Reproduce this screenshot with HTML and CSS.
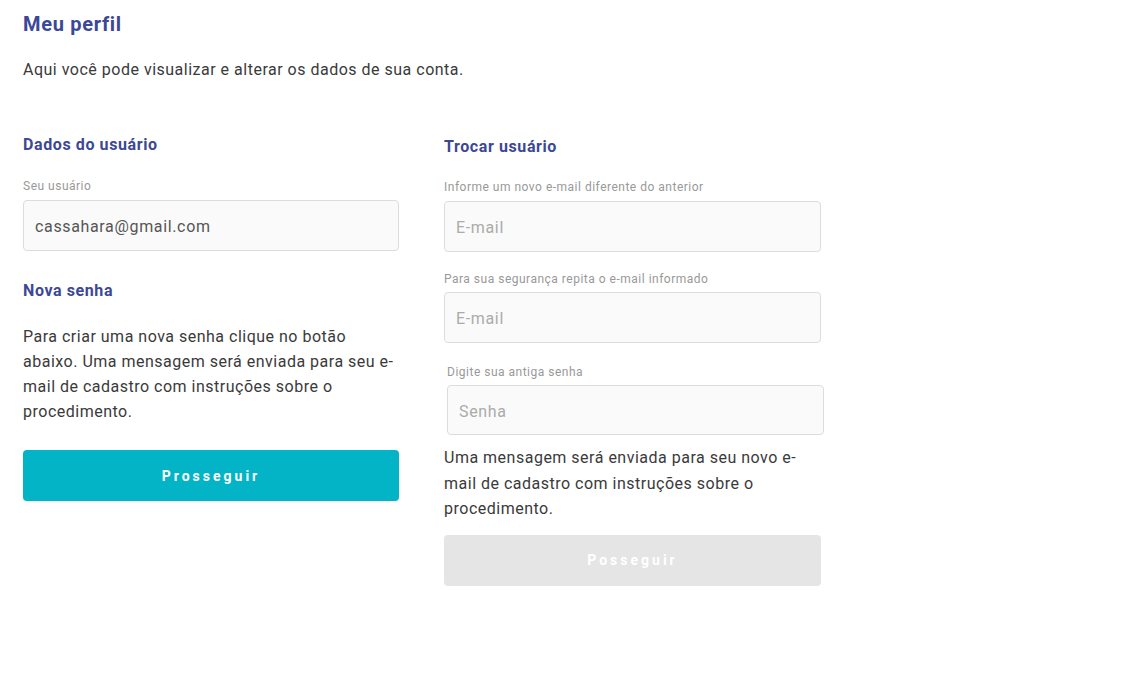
FILE: index.html
```html
<!DOCTYPE html>
<html lang="pt-BR">
<head>
<meta charset="utf-8">
<title>Meu perfil</title>
<link rel="stylesheet" href="styles.css">
</head>
<body>
<main class="page">
  <h1 class="title">Meu perfil</h1>
  <p class="intro">Aqui você pode visualizar e alterar os dados de sua conta.</p>

  <div class="columns">
    <section class="col col-left">
      <h2 class="heading">Dados do usuário</h2>
      <label class="label label-first">Seu usuário</label>
      <div class="field"><span class="value">cassahara@gmail.com</span></div>

      <h2 class="heading heading-second">Nova senha</h2>
      <p class="text text-left">Para criar uma nova senha clique no botão abaixo. Uma mensagem será enviada para seu e-mail de cadastro com instruções sobre o procedimento.</p>
      <button class="btn btn-primary">Prosseguir</button>
    </section>

    <section class="col col-right">
      <h2 class="heading">Trocar usuário</h2>
      <label class="label label-first">Informe um novo e-mail diferente do anterior</label>
      <div class="field"><span class="placeholder">E-mail</span></div>

      <label class="label label-second">Para sua segurança repita o e-mail informado</label>
      <div class="field"><span class="placeholder">E-mail</span></div>

      <div class="shifted">
        <label class="label label-third">Digite sua antiga senha</label>
        <div class="field field-short"><span class="placeholder">Senha</span></div>
      </div>

      <p class="text text-right">Uma mensagem será enviada para seu novo e-mail de cadastro com instruções sobre o procedimento.</p>
      <button class="btn btn-disabled">Posseguir</button>
    </section>
  </div>
</main>
</body>
</html>
```

FILE: styles.css
```css
* { box-sizing: border-box; }

body {
  margin: 0;
  background: #ffffff;
  font-family: Roboto, "Liberation Sans", sans-serif;
  color: #3a3a3a;
}

.page {
  padding: 12px 23px 0;
}

.title {
  margin: 0;
  font-size: 20px;
  line-height: 24px;
  font-weight: 700;
  letter-spacing: 0.7px;
  color: #3b4896;
}

.intro {
  margin: 22px 0 0;
  font-size: 16px;
  line-height: 24px;
  letter-spacing: 0.5px;
  color: #3a3a3a;
}

.columns {
  display: flex;
  gap: 45px;
  margin-top: 53px;
}

.col {
  display: flex;
  flex-direction: column;
}

.col-left { width: 376px; }
.col-right { width: 377px; padding-top: 2px; }

.heading {
  margin: 0;
  font-size: 16px;
  line-height: 20px;
  font-weight: 700;
  letter-spacing: 0.6px;
  color: #3b4896;
}

.heading-second { margin-top: 30px; }

.label {
  display: block;
  font-size: 12px;
  line-height: 16px;
  letter-spacing: 0.5px;
  color: #999999;
  margin-bottom: 6px;
}

.label-first { margin-top: 23px; }
.col-right .label-first { margin-top: 22px; }
.label-second { margin-top: 19px; margin-bottom: 5px; }
.label-third { margin-top: 21px; margin-bottom: 5px; }

.shifted { padding-left: 3px; width: 380px; }

.field {
  height: 51px;
  border: 1px solid #dcdcdc;
  border-radius: 4px;
  background: #fafafa;
  display: flex;
  align-items: center;
  padding: 2px 11px 0;
  font-size: 16px;
  letter-spacing: 0.65px;
}

.field-short { height: 50px; }

.value { color: #555555; }
.placeholder { color: #ababab; }

.text {
  margin: 0;
  font-size: 16px;
  letter-spacing: 0.5px;
  color: #3a3a3a;
}

.text-left { margin-top: 23px; line-height: 25px; }
.text-right { margin-top: 10px; line-height: 25.5px; }

.btn {
  height: 51px;
  border: none;
  border-radius: 4px;
  font-family: inherit;
  font-size: 14px;
  font-weight: 700;
  letter-spacing: 3px;
  color: #ffffff;
  width: 100%;
}

.btn-primary { margin-top: 26px; background: #02b4c6; }
.btn-disabled { margin-top: 13px; background: #e5e5e5; }
```
